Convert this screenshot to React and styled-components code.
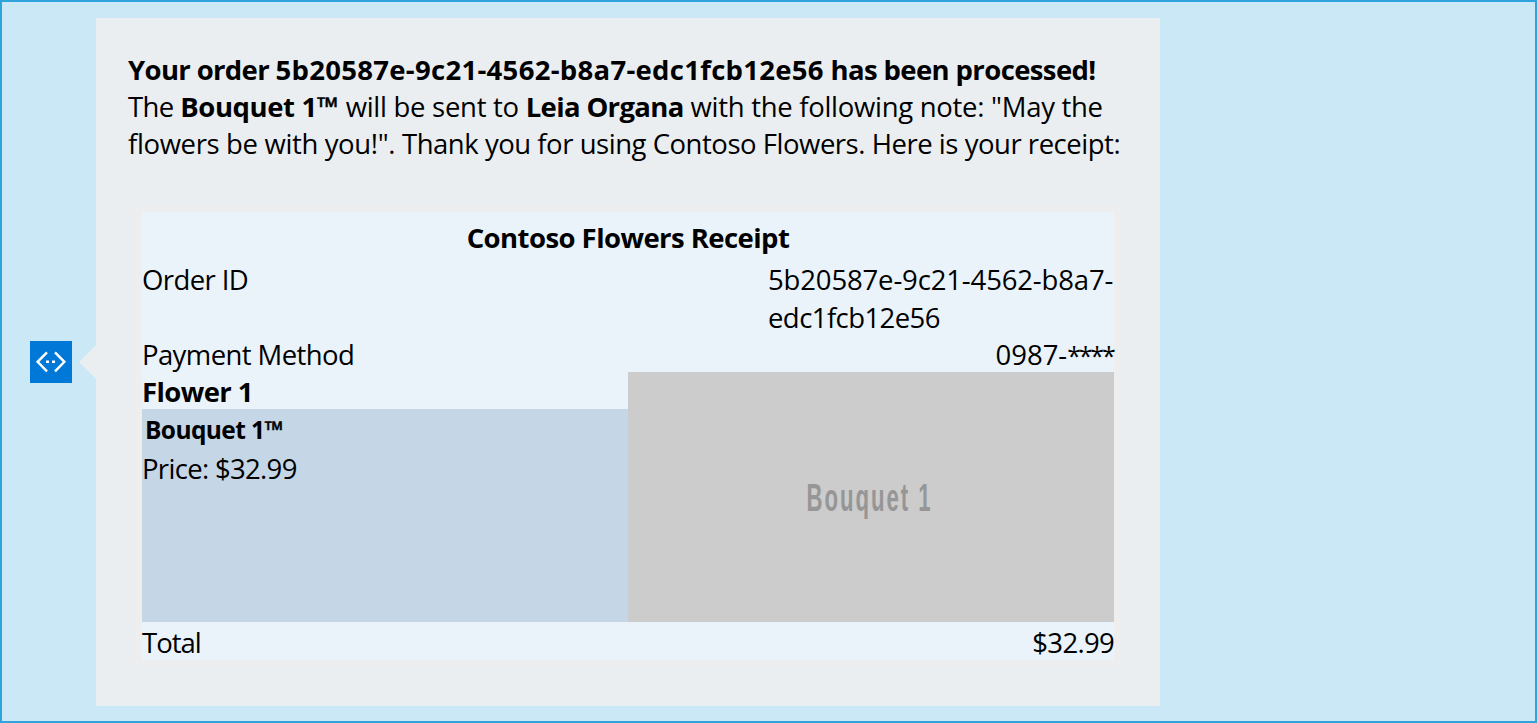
import React from "react";
import styled, { createGlobalStyle } from "styled-components";

const GlobalStyle = createGlobalStyle`
  *, *::before, *::after { box-sizing: border-box; }
  body { margin: 0; }
`;

const Chat = styled.main`
  display: flex;
  align-items: flex-start;
  width: 1537px;
  height: 723px;
  padding: 16px 28px;
  border: 2px solid #2fa3dc;
  background: #cae8f6;
  color: #000;
  font-family: "Segoe UI", "Open Sans", "Noto Sans", sans-serif;
  font-size: 27.5px;
  line-height: 37.33px;
`;

const Message = styled.article`
  display: flex;
  align-items: center;
  height: 688px;
`;

const Avatar = styled.div`
  width: 42px;
  height: 42px;
  background: #0078d7;

  svg { display: block; }
`;

const Pointer = styled.div`
  width: 17px;
  height: 34px;
  margin-left: 7px;
  background: #eaeef1;
  clip-path: polygon(100% 0, 0 50%, 100% 100%);
`;

const Bubble = styled.section`
  width: 1064px;
  height: 688px;
  padding: 33px 32px 0;
  background: #eaeef1;
`;

const Line = styled.p`
  height: 37px;
  margin: 0;
  white-space: pre;
`;

const Text = styled.span`
  font-weight: ${({ $bold }) => ($bold ? 700 : 400)};
  letter-spacing: ${({ $track = 0 }) => $track}px;
  white-space: pre;
`;

const Mark = styled.span`
  font-weight: 700;
  letter-spacing: 0.8px;
  -webkit-text-stroke: 0.5px #000;
`;

const Receipt = styled.div`
  width: 984px;
  margin: 44px 0 0 8px;
  border: 6px solid #eeeeee;
  background: #eaf3fa;
`;

const Title = styled.h2`
  height: 48px;
  margin: 0;
  padding-top: 7px;
  font: inherit;
  text-align: center;
`;

const Row = styled.div`
  display: flex;
  justify-content: space-between;
  height: 37px;
  padding-top: 1px;
`;

const OrderRow = styled(Row)`
  height: 75px;
`;

const TotalRow = styled(Row)`
  height: 38px;
  padding-top: 2px;
`;

const OrderNumber = styled.div`
  display: flex;
  flex-direction: column;
  gap: 0.67px;
  width: 346px;
`;

const Item = styled.div`
  display: flex;
  height: 250px;
`;

const Details = styled.div`
  display: flex;
  flex-direction: column;
  width: 486px;
`;

const ItemHeading = styled.div`
  height: 37px;
  padding-top: 1px;
`;

const Product = styled.div`
  flex: 1;
  background: #c5d6e6;
`;

const ProductName = styled.div`
  height: 41px;
  padding: 2px 0 0 3px;
  font-size: 24.5px;
`;

const Masked = styled.span`
  margin-right: 0.5px;
  font-size: 25px;
  line-height: 1;
  letter-spacing: -2.2px;
`;

const Placeholder = styled.div`
  display: flex;
  align-items: center;
  justify-content: center;
  width: 486px;
  background: #cccccc;
  color: #969696;
`;

const PlaceholderLabel = styled.span`
  margin: 2px 2px 0 0;
  font: 700 38.6px "Liberation Sans Narrow", "Liberation Sans", sans-serif;
  letter-spacing: 3.4px;
  transform: scaleX(0.575);
  white-space: nowrap;
`;

export default function App() {
  return (
    <>
      <GlobalStyle />
      <Chat>
        <Message>
          <Avatar>
            <svg width="42" height="42" viewBox="0 0 42 42" fill="none">
              <path d="M17 11.3 7.6 20.8l9.4 9.5M25 11.3l9.4 9.5-9.4 9.5" stroke="#fff" strokeWidth="2.4" />
              <path d="M16 19.4h3v2.7h-3zM22 19.4h3v2.7h-3z" fill="#fff" />
            </svg>
          </Avatar>
          <Pointer />
          <Bubble>
            <Line>
              <Text $bold $track={-0.65}>{"Your order "}</Text>
              <Text $bold $track={0.29}>5b20587e-9c21-4562-b8a7-edc1fcb12e56</Text>
              <Text $bold $track={-0.61}>{" has been processed!"}</Text>
            </Line>
            <Line>
              <Text $track={-0.6}>{"The "}</Text>
              <Text $bold $track={-0.4}>Bouquet 1</Text>
              <Mark>™</Mark>
              <Text $track={-0.28}>{" will be sent to "}</Text>
              <Text $bold $track={-0.65}>Leia Organa</Text>
              <Text $track={-0.29}>{' with the following note: "May the'}</Text>
            </Line>
            <Line>
              <Text $track={-0.36}>{'flowers be with you!". '}</Text>
              <Text $track={-0.47}>{"Thank you for using Contoso Flowers. Here is your receipt:"}</Text>
            </Line>
            <Receipt>
              <Title>
                <Text $bold $track={-0.56}>Contoso Flowers Receipt</Text>
              </Title>
              <OrderRow>
                <Text $track={-0.6}>Order ID</Text>
                <OrderNumber>
                  <Text $track={-0.15}>5b20587e-9c21-4562-b8a7-</Text>
                  <Text $track={-0.57}>edc1fcb12e56</Text>
                </OrderNumber>
              </OrderRow>
              <Row>
                <Text $track={-0.6}>Payment Method</Text>
                <Text>0987-<Masked>****</Masked></Text>
              </Row>
              <Item>
                <Details>
                  <ItemHeading>
                    <Text $bold $track={-0.6}>Flower 1</Text>
                  </ItemHeading>
                  <Product>
                    <ProductName>
                      <Text $bold $track={-0.6}>Bouquet 1</Text>
                      <Mark>™</Mark>
                    </ProductName>
                    <Text $track={-0.68}>Price: $32.99</Text>
                  </Product>
                </Details>
                <Placeholder>
                  <PlaceholderLabel>Bouquet 1</PlaceholderLabel>
                </Placeholder>
              </Item>
              <TotalRow>
                <Text $track={-1}>Total</Text>
                <Text $track={-0.7}>$32.99</Text>
              </TotalRow>
            </Receipt>
          </Bubble>
        </Message>
      </Chat>
    </>
  );
}
